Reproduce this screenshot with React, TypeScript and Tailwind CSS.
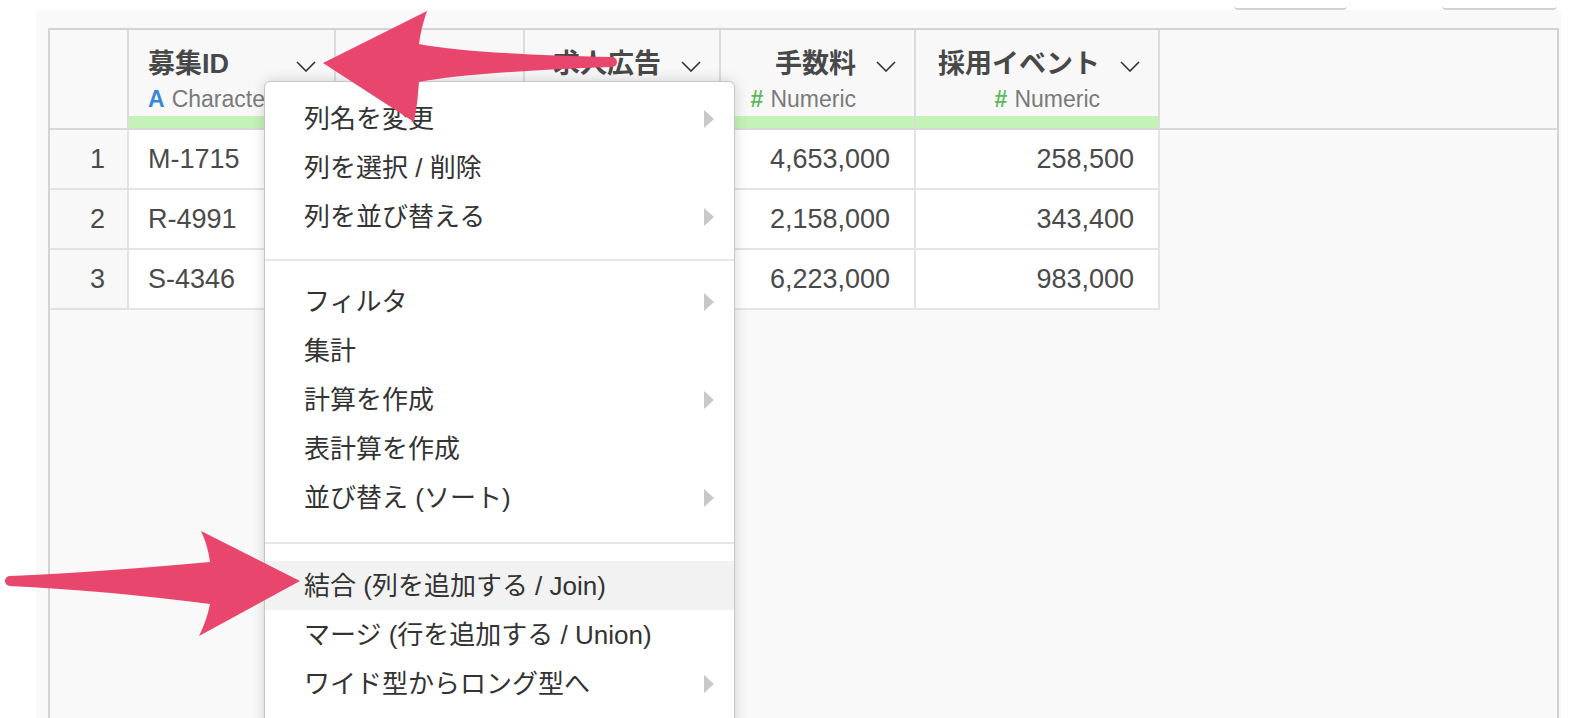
import React from "react";

type Col = { title: string; type: "" | "Character" | "Numeric"; w: string; right: boolean };

const cols: Col[] = [
  { title: "募集ID", type: "Character", w: "w-[207px]", right: false },
  { title: "", type: "", w: "w-[189px]", right: false },
  { title: "求人広告", type: "Numeric", w: "w-[196px]", right: true },
  { title: "手数料", type: "Numeric", w: "w-[195px]", right: true },
  { title: "採用イベント", type: "Numeric", w: "w-[244px]", right: true },
];

const rows = [
  ["M-1715", "", "1,820,000", "4,653,000", "258,500"],
  ["R-4991", "", "960,000", "2,158,000", "343,400"],
  ["S-4346", "", "2,410,000", "6,223,000", "983,000"],
];

const menu = [
  [
    { label: "列名を変更", sub: true },
    { label: "列を選択 / 削除" },
    { label: "列を並び替える", sub: true },
  ],
  [
    { label: "フィルタ", sub: true },
    { label: "集計" },
    { label: "計算を作成", sub: true },
    { label: "表計算を作成" },
    { label: "並び替え (ソート)", sub: true },
  ],
  [
    { label: "結合 (列を追加する / Join)", active: true },
    { label: "マージ (行を追加する / Union)" },
    { label: "ワイド型からロング型へ", sub: true },
  ],
];

function Chevron() {
  return (
    <svg width="20" height="11" viewBox="0 0 20 11" className="shrink-0">
      <path d="M1 1 L10 10 L19 1" stroke="#333" strokeWidth="1.6" fill="none" />
    </svg>
  );
}

function TypeLabel({ type }: { type: Col["type"] }) {
  if (!type) return null;
  return (
    <div className="flex items-center gap-[7px] text-[23px] leading-[26px] whitespace-nowrap">
      {type === "Character" ? (
        <span className="font-bold text-[#3a86d4]">A</span>
      ) : (
        <span className="font-bold text-[#5cb85c]">#</span>
      )}
      <span className="text-[#7a7a7a]">{type}</span>
    </div>
  );
}

export default function App() {
  return (
    <div className="relative w-[1576px] h-[718px] overflow-hidden bg-white font-['Liberation_Sans','Noto_Sans_CJK_JP',sans-serif]">
      {/* top toolbar buttons (bottom edges only) */}
      <div className="h-[10px] flex justify-end gap-[95px] pr-[19px]">
        <div className="w-[113px] h-[10px] border-b-2 border-[#d2d2d2] rounded-b-[4px]" />
        <div className="w-[115px] h-[10px] border-b-2 border-[#d2d2d2] rounded-b-[4px]" />
      </div>

      {/* grid area */}
      <div className="ml-[36px] w-[1525px] h-[708px] bg-[#f9f9f9] pl-[12px] pt-[18px]">
        <div className="w-[1511px] h-full border-2 border-b-0 border-[#d3d3d3] bg-[#f9f9f9]">
          {/* header */}
          <div className="flex h-[100px] border-b-2 border-[#d9d9d9]">
            <div className="w-[79px] border-r-2 border-[#dcdcdc]" />
            {cols.map((c, i) => (
              <div key={i} className={`${c.w} flex flex-col border-r-2 border-[#dcdcdc] bg-[#f8f8f8]`}>
                <div className="flex-1 flex min-w-0">
                  <div
                    className={`flex-1 min-w-0 flex flex-col pt-[19px] ${c.right ? "items-end" : "items-start pl-[19px]"}`}
                  >
                    <div className="text-[27px] leading-[30px] font-bold text-[#484848] whitespace-nowrap">
                      {c.title || "\u00a0"}
                    </div>
                    <div className="mt-[7px]">
                      <TypeLabel type={c.type} />
                    </div>
                  </div>
                  <div className="ml-[20px] mr-[18px] mt-[31px]">
                    <Chevron />
                  </div>
                </div>
                <div className="h-[12px] bg-[#c4f3b8]" />
              </div>
            ))}
            <div className="flex-1" />
          </div>

          {/* data rows */}
          {rows.map((r, ri) => (
            <div key={ri} className="flex h-[60px]">
              <div className="w-[79px] border-r-2 border-b-2 border-[#e2e2e2] bg-[#f8f8f8] flex items-center justify-end pr-[22px] text-[27px] text-[#4a4a4a]">
                {ri + 1}
              </div>
              {r.map((v, ci) => (
                <div
                  key={ci}
                  className={`${cols[ci].w} border-r-2 border-b-2 border-[#e4e4e4] bg-white flex items-center text-[27px] text-[#4a4a4a] whitespace-nowrap ${
                    cols[ci].right ? "justify-end pr-[24px]" : "pl-[19px]"
                  }`}
                >
                  {v}
                </div>
              ))}
            </div>
          ))}
        </div>
      </div>

      {/* context menu */}
      <div className="absolute left-[264px] top-[81px] w-[471px] h-[700px] bg-white border border-[#c6c6c6] rounded-t-[6px] shadow-[0_0_14px_rgba(0,0,0,0.16)] text-[26px] text-[#333]">
        {menu.map((sec, si) => (
          <div
            key={si}
            className={
              si === 0
                ? "pt-[12px] pb-[18px] border-b-2 border-[#e6e6e6]"
                : si === 1
                ? "pt-[16px] pb-[20px] border-b-2 border-[#e6e6e6]"
                : "pt-[17px]"
            }
          >
            {sec.map((it: { label: string; sub?: boolean; active?: boolean }) => (
              <div
                key={it.label}
                className={`h-[49px] flex items-center pl-[39px] pr-[20px] whitespace-nowrap ${it.active ? "bg-[#f2f2f2]" : ""}`}
              >
                <span className="flex-1 leading-[30px]">{it.label}</span>
                {it.sub && (
                  <svg width="10" height="18" viewBox="0 0 10 18">
                    <path d="M0 0 L10 9 L0 18 Z" fill="#c8c8c8" />
                  </svg>
                )}
              </div>
            ))}
          </div>
        ))}
      </div>

      {/* annotation arrows */}
      <svg className="absolute left-0 top-0 pointer-events-none" width="1576" height="718" viewBox="0 0 1576 718">
        <path
          d="M323 63 L427 11 Q421 28 419 44 Q470 54 612 57 A5 5 0 0 1 612 67 Q470 72 419 82 Q418 102 414 122 Z"
          fill="#e9466d"
        />
        <path
          d="M300 581 L201 531 Q208 546 210 562 Q100 572 10 576 A5 5 0 0 0 10 586 Q100 590 210 604 Q207 620 199 636 Z"
          fill="#e9466d"
        />
      </svg>
    </div>
  );
}
